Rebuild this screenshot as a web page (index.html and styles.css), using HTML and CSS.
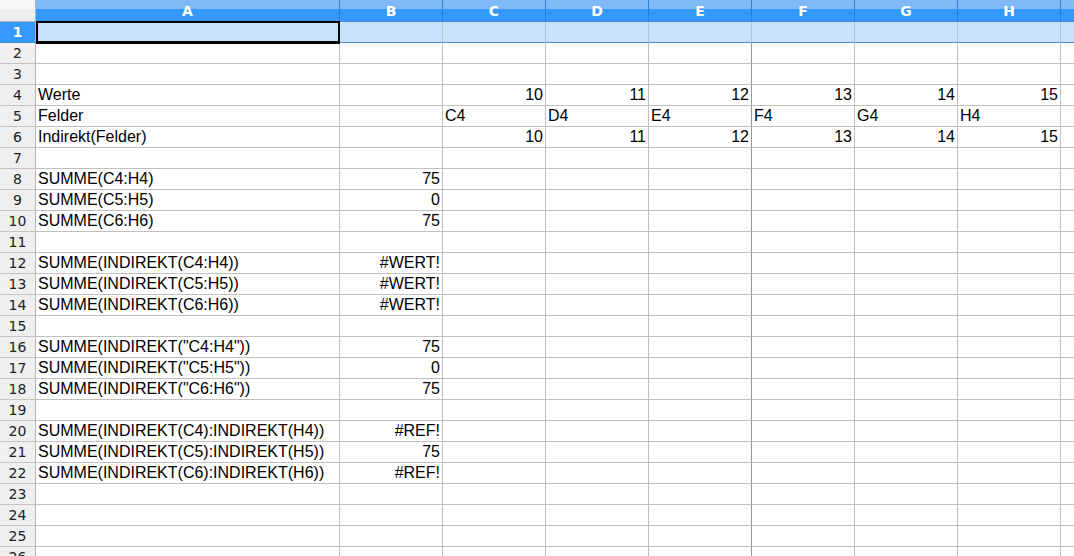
FILE: index.html
```html
<!DOCTYPE html>
<html lang="de">
    <head>
        <meta charset="UTF-8" />
        <meta name="viewport" content="width=device-width, initial-scale=1.0" />
        <title>Indirekt</title>
        <link rel="stylesheet" href="styles.css">
    </head>
    <body>
        <div class="sheet" id="sheet"></div>
        <script>
            const columns = ["A", "B", "C", "D", "E", "F", "G", "H", ""];
            const rowCount = 26;
            // numbers go right, text goes left
            const data = {
                4: { A: "Werte", C: 10, D: 11, E: 12, F: 13, G: 14, H: 15 },
                5: { A: "Felder", C: "C4", D: "D4", E: "E4", F: "F4", G: "G4", H: "H4" },
                6: { A: "Indirekt(Felder)", C: 10, D: 11, E: 12, F: 13, G: 14, H: 15 },
                8: { A: "SUMME(C4:H4)", B: 75 },
                9: { A: "SUMME(C5:H5)", B: 0 },
                10: { A: "SUMME(C6:H6)", B: 75 },
                12: { A: "SUMME(INDIREKT(C4:H4))", B: "#WERT!" },
                13: { A: "SUMME(INDIREKT(C5:H5))", B: "#WERT!" },
                14: { A: "SUMME(INDIREKT(C6:H6))", B: "#WERT!" },
                16: { A: 'SUMME(INDIREKT("C4:H4"))', B: 75 },
                17: { A: 'SUMME(INDIREKT("C5:H5"))', B: 0 },
                18: { A: 'SUMME(INDIREKT("C6:H6"))', B: 75 },
                20: { A: "SUMME(INDIREKT(C4):INDIREKT(H4))", B: "#REF!" },
                21: { A: "SUMME(INDIREKT(C5):INDIREKT(H5))", B: 75 },
                22: { A: "SUMME(INDIREKT(C6):INDIREKT(H6))", B: "#REF!" },
            };
            const sheet = document.getElementById("sheet");

            function cell(className, text) {
                const div = document.createElement("div");
                div.className = className;
                if (text !== undefined) div.textContent = text;
                sheet.appendChild(div);
                return div;
            }

            cell("corner");
            for (const col of columns) {
                cell("col-head", col);
            }
            for (let r = 1; r <= rowCount; r++) {
                const active = r === 1 ? " active" : "";
                cell("row-head" + active, r);
                for (const col of columns) {
                    const value = (data[r] || {})[col];
                    let cls = "cell" + active;
                    if (col === "E") cls += " page-break";
                    if (value !== undefined && (typeof value === "number" || value.startsWith("#"))) {
                        cls += " num";
                    }
                    const div = cell(cls, value);
                    if (r === 1 && col === "A") {
                        div.appendChild(document.createElement("span")).className = "cursor";
                    }
                }
            }
        </script>
    </body>
</html>
```

FILE: styles.css
```css
html, body {
    margin: 0;
    height: 100%;
    overflow: hidden;
    background: #fff;
}
.sheet {
    display: grid;
    grid-template-columns: 36px 304px repeat(8, 103px);
    grid-template-rows: 22px;
    grid-auto-rows: 21px;
    font-family: "Liberation Sans", Arial, sans-serif;
    font-size: 16px;
    color: #000;
}
.sheet > div {
    box-sizing: border-box;
    white-space: nowrap;
    overflow: hidden;
}
.corner {
    background: linear-gradient(#f6f6f6 0 9px, #eeeeee 9px);
    border-right: 1px solid #b4b4b4;
    border-bottom: 1px solid #b4b4b4;
}
.col-head {
    background: linear-gradient(#7fbaf7 0 9px, #3598fd 9px);
    border-right: 1px solid #2d82d8;
    border-bottom: 1px solid #3d8ad6;
    color: #fff;
    font-family: "DejaVu Sans", sans-serif;
    font-weight: bold;
    font-size: 14px;
    text-align: center;
    line-height: 22px;
}
.row-head {
    background: #efefef;
    border-right: 1px solid #b4b4b4;
    border-bottom: 1px solid #c4c4c4;
    color: #222;
    font-family: "DejaVu Sans", sans-serif;
    font-size: 14px;
    text-align: center;
    line-height: 21px;
}
.row-head.active {
    background: #3598fd;
    color: #fff;
    font-weight: bold;
    border-bottom-color: #3d8ad6;
}
.cell {
    border-right: 1px solid #c0c0c0;
    border-bottom: 1px solid #c0c0c0;
    padding: 0 2px;
    line-height: 20px;
}
.cell.page-break {
    border-right-color: #9a9a9a;
}
.cell.num {
    text-align: right;
}
.cell.active {
    background: #c9e2fb;
    border-right-color: #a9c4e0;
    border-bottom-color: #4a8fd8;
    position: relative;
    overflow: visible;
}
.cursor {
    position: absolute;
    top: -1px;
    left: 0;
    right: -1px;
    bottom: -2px;
    border: 2px solid #000;
    border-bottom-width: 3px;
    z-index: 2;
}
```
